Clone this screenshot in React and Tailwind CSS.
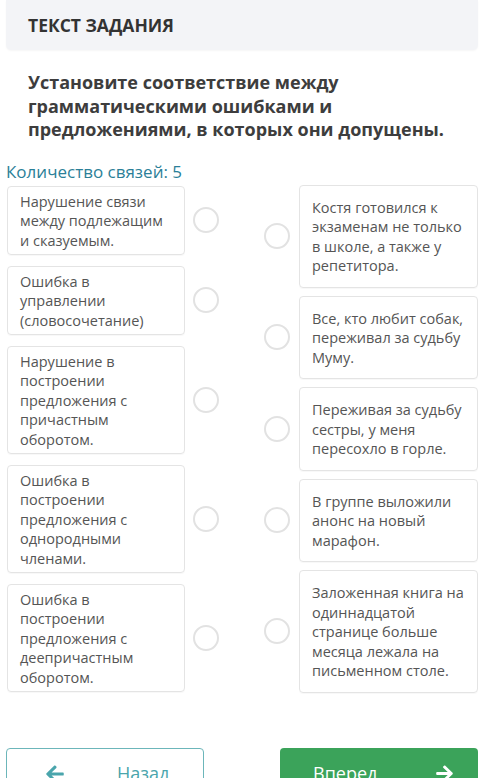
import { FaArrowLeft, FaArrowRight } from 'react-icons/fa';

const leftItems = [
  ['Нарушение связи', 'между подлежащим', 'и сказуемым.'],
  ['Ошибка в', 'управлении', '(словосочетание)'],
  ['Нарушение в', 'построении', 'предложения с', 'причастным', 'оборотом.'],
  ['Ошибка в', 'построении', 'предложения с', 'однородными', 'членами.'],
  ['Ошибка в', 'построении', 'предложения с', 'деепричастным', 'оборотом.'],
];

const rightItems = [
  ['Костя готовился к', 'экзаменам не только', 'в школе, а также у', 'репетитора.'],
  ['Все, кто любит собак,', 'переживал за судьбу', 'Муму.'],
  ['Переживая за судьбу', 'сестры, у меня', 'пересохло в горле.'],
  ['В группе выложили', 'анонс на новый', 'марафон.'],
  ['Заложенная книга на', 'одиннадцатой', 'странице больше', 'месяца лежала на', 'письменном столе.'],
];

const Dot = () => (
  <div className="w-[26px] h-[26px] rounded-full border-2 border-[#e2e2e2] bg-white flex-shrink-0" />
);

const Lines = ({ lines }) => (
  <>
    {lines.map((l, i) => (
      <div key={i} className="whitespace-nowrap">{l}</div>
    ))}
  </>
);

export default function App() {
  return (
    <div className="w-[500px] h-[778px] overflow-hidden bg-white font-['Open_Sans',sans-serif] text-[#555]">
      {/* Header */}
      <div className="ml-[6px] w-[472px] h-[50px] bg-[#f3f4f7] rounded-b-[5px] shadow-[0_1px_2px_rgba(0,0,0,0.04)] flex items-center pl-[22px]">
        <span className="text-[17.5px] font-bold text-[#333]">ТЕКСТ ЗАДАНИЯ</span>
      </div>

      {/* Question */}
      <div className="pl-[28px] pt-[21px] text-[18px] leading-[23.5px] font-bold text-[#3d3d3d]">
        <div>Установите соответствие между</div>
        <div>грамматическими ошибками и</div>
        <div>предложениями, в которых они допущены.</div>
      </div>

      <div className="pl-[6px] mt-[18px] text-[17px] leading-[24px] text-[#2b7f98]">Количество связей: 5</div>

      {/* Matching */}
      <div className="flex mt-[1px]">
        <div className="ml-[7px] w-[213px] flex flex-col gap-[10.5px] pt-[1px]">
          {leftItems.map((lines, i) => (
            <div key={i} className="flex items-center gap-[8px]">
              <div className="w-[178px] border border-[#e4e4e4] rounded-[4px] px-[12px] pt-[5px] pb-[4px] text-[14.5px] leading-[19.5px] shadow-[0_1px_1px_rgba(0,0,0,0.03)]">
                <Lines lines={lines} />
              </div>
              <Dot />
            </div>
          ))}
        </div>
        <div className="ml-[44px] flex flex-col gap-[8px]">
          {rightItems.map((lines, i) => (
            <div key={i} className="flex items-center gap-[9px]">
              <Dot />
              <div className="w-[179px] border border-[#e4e4e4] rounded-[4px] px-[12px] pt-[12px] pb-[11px] text-[14.5px] leading-[19.5px] shadow-[0_1px_1px_rgba(0,0,0,0.03)]">
                <Lines lines={lines} />
              </div>
            </div>
          ))}
        </div>
      </div>

      {/* Buttons */}
      <div className="flex justify-between ml-[6px] w-[472px] mt-[55px]">
        <button className="w-[198px] h-[52px] border border-[#6cb6ba] rounded-[4px] bg-white flex items-center pl-[38px] text-[#4aa5ac]">
          <FaArrowLeft size={20} />
          <span className="ml-[52px] text-[18px]">Назад</span>
        </button>
        <button className="w-[198px] h-[52px] rounded-[4px] bg-[#3ba35a] flex items-center pl-[33px] text-white">
          <span className="text-[18px]">Вперед</span>
          <FaArrowRight size={19} className="ml-[58px]" />
        </button>
      </div>
    </div>
  );
}
